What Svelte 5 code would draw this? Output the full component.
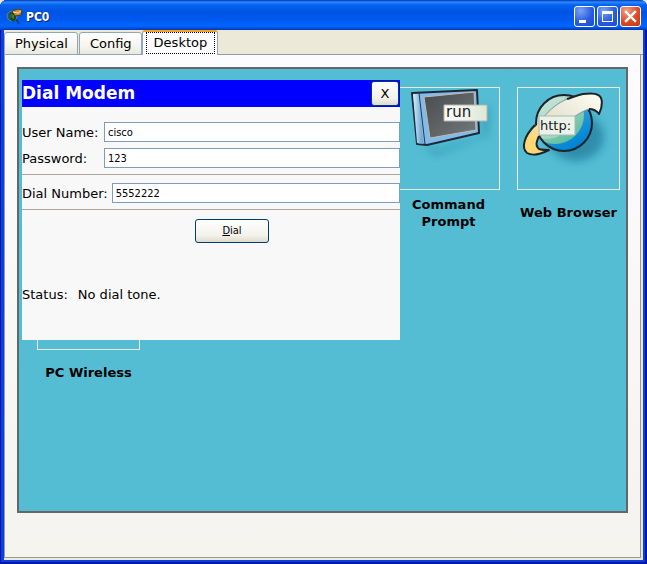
<script>
  let user = $state('cisco');
  let password = $state('123');
  let number = $state('5552222');
  let active = $state('Desktop');
  const tabs = ['Physical', 'Config', 'Desktop'];
</script>

<main class="window">
  <header class="titlebar">
    <svg class="logo" width="16" height="16" viewBox="0 0 16 16" aria-hidden="true">
      <path d="M10 10 13 15" stroke="#123f86" stroke-width="2" />
      <circle cx="6" cy="7" r="5" fill="#27556c" stroke="#5c8497" />
      <path d="M4 4 9 3 10 10 7 13 4 10 6 8Z" fill="#164b12" />
      <path d="M5 5 8 6 8 10 6 9Z" fill="#42851f" />
      <path d="M6 2 12 0 16 1 15 6 9 7Z" fill="#c7903b" stroke="#533b1b" />
      <path d="M7 3 12 4 15 2" fill="none" stroke="#ffe19a" />
    </svg>
    <h1>PC0</h1>
    <div class="controls">
      <button aria-label="Minimize"><svg viewBox="0 0 21 21"><path d="M5 14h7v3H5z" fill="#fff" /></svg></button>
      <button aria-label="Maximize"><svg viewBox="0 0 21 21"><path d="M5 5h11v11H5z M6 8v7h9V8z" fill="#fff" fill-rule="evenodd" /></svg></button>
      <button class="close" aria-label="Close"><svg viewBox="0 0 21 21"><path d="m6 6 9 9m0-9-9 9" stroke="#fff" stroke-width="2.4" stroke-linecap="square" /></svg></button>
    </div>
  </header>

  <div class="client">
    <div class="tabs" role="tablist">
      {#each tabs as tab}
        <button role="tab" aria-selected={active === tab} class:active={active === tab} onclick={() => (active = tab)}><span>{tab}</span></button>
      {/each}
    </div>

    <section class="page">
      <div class="desktop">
        <div class="apps">
          <div class="app prompt">
            <div class="frame">
              <svg viewBox="0 0 101 101" aria-hidden="true">
                <defs>
                  <linearGradient id="side" x2="1"><stop stop-color="#d4efff" /><stop offset="1" stop-color="#649dcb" /></linearGradient>
                  <linearGradient id="screen" x2="1" y2="1"><stop stop-color="#484c4e" /><stop offset="1" stop-color="#74797b" /></linearGradient>
                  <linearGradient id="tag" x2="1"><stop stop-color="#fff" /><stop offset="1" stop-color="#dce7d5" /></linearGradient>
                  <filter id="soft" x="-30%" y="-30%" width="160%" height="160%"><feGaussianBlur stdDeviation="4" /></filter>
                </defs>
                <path d="M24 58 40 62 86 48 84 18 90 22 89 48 38 66Z" fill="#186c8c" opacity=".6" filter="url(#soft)" />
                <path d="M14 5 79 2 81 45 29 57 19 56Z" fill="#80bbea" stroke="#202833" stroke-width="2" stroke-linejoin="round" />
                <path d="M15 6 21 6 25 56 19 55Z" fill="url(#side)" />
                <path d="M21 5 27 56" stroke="#26394c" />
                <path d="M26 9 76 4 78 42 32 50Z" fill="url(#screen)" stroke="#c3b9b1" />
                <path d="M46 17h43v16H46z" fill="url(#tag)" stroke="#aeb7b2" />
                <text x="48" y="29" font-size="15">run</text>
              </svg>
            </div>
            <div class="label"><span>Command Prompt</span></div>
          </div>
          <div class="app browser">
            <div class="frame">
              <svg viewBox="0 0 101 101" aria-hidden="true">
                <defs>
                  <linearGradient id="ocean" x2=".5" y2="1"><stop stop-color="#d9e9ec" /><stop offset=".4" stop-color="#3ba4da" /><stop offset="1" stop-color="#0085d4" /></linearGradient>
                  <linearGradient id="land" x2=".6" y2="1"><stop stop-color="#e4f0ee" /><stop offset=".4" stop-color="#b4dccd" /><stop offset="1" stop-color="#63bfa0" /></linearGradient>
                  <linearGradient id="swoosh" x1="1" x2="0" y2="1"><stop stop-color="#fffef3" /><stop offset=".45" stop-color="#e8e6d5" /><stop offset=".85" stop-color="#ffd873" /></linearGradient>
                  <clipPath id="globe"><circle cx="46" cy="35" r="28" /></clipPath>
                </defs>
                <ellipse cx="58" cy="49" rx="28" ry="24" fill="#176f91" opacity=".6" filter="url(#soft)" />
                <circle cx="46" cy="35" r="28" fill="url(#ocean)" />
                <g clip-path="url(#globe)">
                  <circle cx="37" cy="27" r="29" fill="url(#land)" />
                  <circle cx="29" cy="27" r="24" fill="#c9e6da" opacity=".5" />
                </g>
                <circle cx="46" cy="35" r="28" fill="none" stroke="#1d2328" stroke-width="2" />
                <path d="M25 30C36 17 49 10 65 6c7-1 12-1 15 1 5 2 5 11 1 19-3-4-7-5-10-5-7 2-12 6-17 9-13 6-32 12-34 20-3 6-3 10 1 11l10 1c-8 4-17 6-22 3-7-7 0-18 10-28Z" fill="url(#swoosh)" />
                <path d="M17 37C6 48 3 60 9 65c5 3 14 1 22-3-6 0-10 0-11-2-3-3-1-7 1-12M49 11C55 9 60 7 65 6c7-1 12-1 15 1 5 2 5 11 1 19-3-4-7-5-10-5" fill="none" stroke="#1d2328" stroke-width="2" stroke-linejoin="round" />
                <path d="M25 30C32 21 40 15 49 11M71 21c-6 2-11 5-15 8" fill="none" stroke="#829799" />
                <path d="M21 28h36v19H21z" fill="#edf2e9" stroke="#a5bab5" />
                <text x="22" y="42" font-size="13">http:</text>
              </svg>
            </div>
            <div class="label"><span>Web Browser</span></div>
          </div>
          <div class="app wireless">
            <div class="frame"></div>
            <div class="label"><span>PC Wireless</span></div>
          </div>
        </div>

        <form class="dialog" onsubmit={(e) => e.preventDefault()}>
          <header><h2>Dial Modem</h2><button type="button" class="x">X</button></header>
          <div class="fields">
            <label for="user">User Name:</label><input id="user" bind:value={user} />
            <label for="password">Password:</label><input id="password" bind:value={password} />
          </div>
          <div class="number"><label for="number">Dial Number:</label><input id="number" bind:value={number} /></div>
          <button class="dial"><u>D</u>ial</button>
          <p><span>Status:</span><span>No dial tone.</span></p>
        </form>
      </div>
    </section>
  </div>
</main>

<style>
  :global(body) { margin: 0; background: #ece9d8; }
  * { box-sizing: border-box; }
  button, input { font: inherit; color: inherit; margin: 0; }
  h1, h2, p { margin: 0; }
  .window {
    display: flex; flex-direction: column; min-height: 100vh;
    padding: 0 4px 4px; border-radius: 7px 7px 0 0;
    background: #0841de; box-shadow: inset 1px 0 #0014a8, inset -2px -2px #0014a8;
    font: 13px/17px "DejaVu Sans", Verdana, sans-serif; color: #000;
  }
  .titlebar {
    display: flex; align-items: center; height: 30px; margin: 0 -4px; padding: 3px 6px 0;
    border-radius: 7px 7px 0 0;
    background: linear-gradient(#0831b5 0, #2a8cff 2px, #0562ee 5px, #0054e3 12px, #0058ee 19px, #0066ff 26px, #0045d0 29px, #0035a8 30px);
  }
  h1 { flex: 1; margin-left: 4px; color: #fff; font: bold 12px/20px "DejaVu Sans Condensed", "DejaVu Sans", sans-serif; text-shadow: 1px 1px #09267f; }
  .controls { display: flex; gap: 2px; }
  .controls button { width: 21px; height: 21px; padding: 0; border: 1px solid #fff; border-radius: 3px; background: radial-gradient(circle at 30% 20%, #7ca2f5, #2a5ce0 55%, #1c4bcf); }
  .controls .close { background: radial-gradient(circle at 30% 20%, #f0a087, #dc4a25 55%, #c33a12); }
  .controls svg { display: block; width: 21px; height: 21px; margin: -1px; fill: none; }

  .client { flex: 1; display: flex; flex-direction: column; padding-bottom: 2px; background: #ece9d8; }
  .tabs { display: flex; align-items: flex-end; height: 25px; padding-right: 2px; background: linear-gradient(#919b9c, #919b9c) 0 100% / 100% 1px no-repeat; }
  .tabs button {
    height: 23px; padding: 0 9px 1px 10px; margin-right: 1px; border: 1px solid #91a7b4; border-radius: 3px 3px 0 0;
    background: linear-gradient(#fff, #f6f5f0 60%, #e9e8de);
  }
  .tabs button.active { height: 25px; margin-left: -1px; padding: 0 2px 1px 3px; border-top: 2px solid #f9a11b; border-bottom: 0; background: #fcfcfe; }
  .tabs .active span { display: block; padding: 1px 7px 2px; border: 1px dotted #000; }
  .page {
    flex: 1; display: flex; padding: 12px 12px 44px; margin-right: 2px;
    border: 1px solid #919b9c; border-top: 0;
    background: linear-gradient(#fcfcfe, #f4f3ee);
  }
  .desktop { position: relative; flex: 1; border: 2px solid #666; background: #54bdd4; }
  .apps { display: grid; grid-template-columns: repeat(5, 103px); gap: 13px 17px; padding: 18px 6px 18px 18px; }
  .prompt { grid-area: 1 / 4; }
  .browser { grid-area: 1 / 5; }
  .wireless { grid-area: 2 / 1; }
  .frame { height: 103px; border: 1px solid #ece9d8; }
  .frame svg { display: block; width: 101px; height: 101px; }
  .frame text { fill: #202020; }
  .label { display: flex; align-items: center; justify-content: center; height: 45px; margin-bottom: -1px; font-weight: bold; text-align: center; }

  .dialog { position: absolute; left: 3px; top: 11px; width: 378px; padding-bottom: 37px; background: #f8f8f8; }
  .dialog header { display: flex; align-items: center; justify-content: space-between; height: 27px; padding-right: 1px; background: #0000fe; }
  h2 { color: #fff; font-size: 17px; line-height: 27px; }
  .x, .dial { border: 1px solid #003c74; border-radius: 3px; background: linear-gradient(#fff, #f3f2ec 70%, #dedbcc); }
  .x { width: 28px; height: 25px; padding: 0; }
  .fields { display: grid; grid-template-columns: 82px 1fr; gap: 6px 0; align-items: center; padding: 15px 0 6px; }
  .number { display: flex; gap: 4px; align-items: center; padding: 8px 0 6px; border: solid #aca899; border-width: 1px 0; }
  .number input { flex: 1; }
  .dialog input { min-width: 0; height: 20px; padding: 0 3px; border: 1px solid #7f9db9; border-radius: 0; background: #fff; outline: 0; }
  .dialog input, .dial { font: 11px/16px "DejaVu Sans Condensed", Tahoma, sans-serif; }
  .dial { display: block; width: 74px; height: 24px; margin: 9px auto 0 173px; padding: 0; }
  .dialog p { display: flex; gap: 10px; margin-top: 43px; }
</style>
